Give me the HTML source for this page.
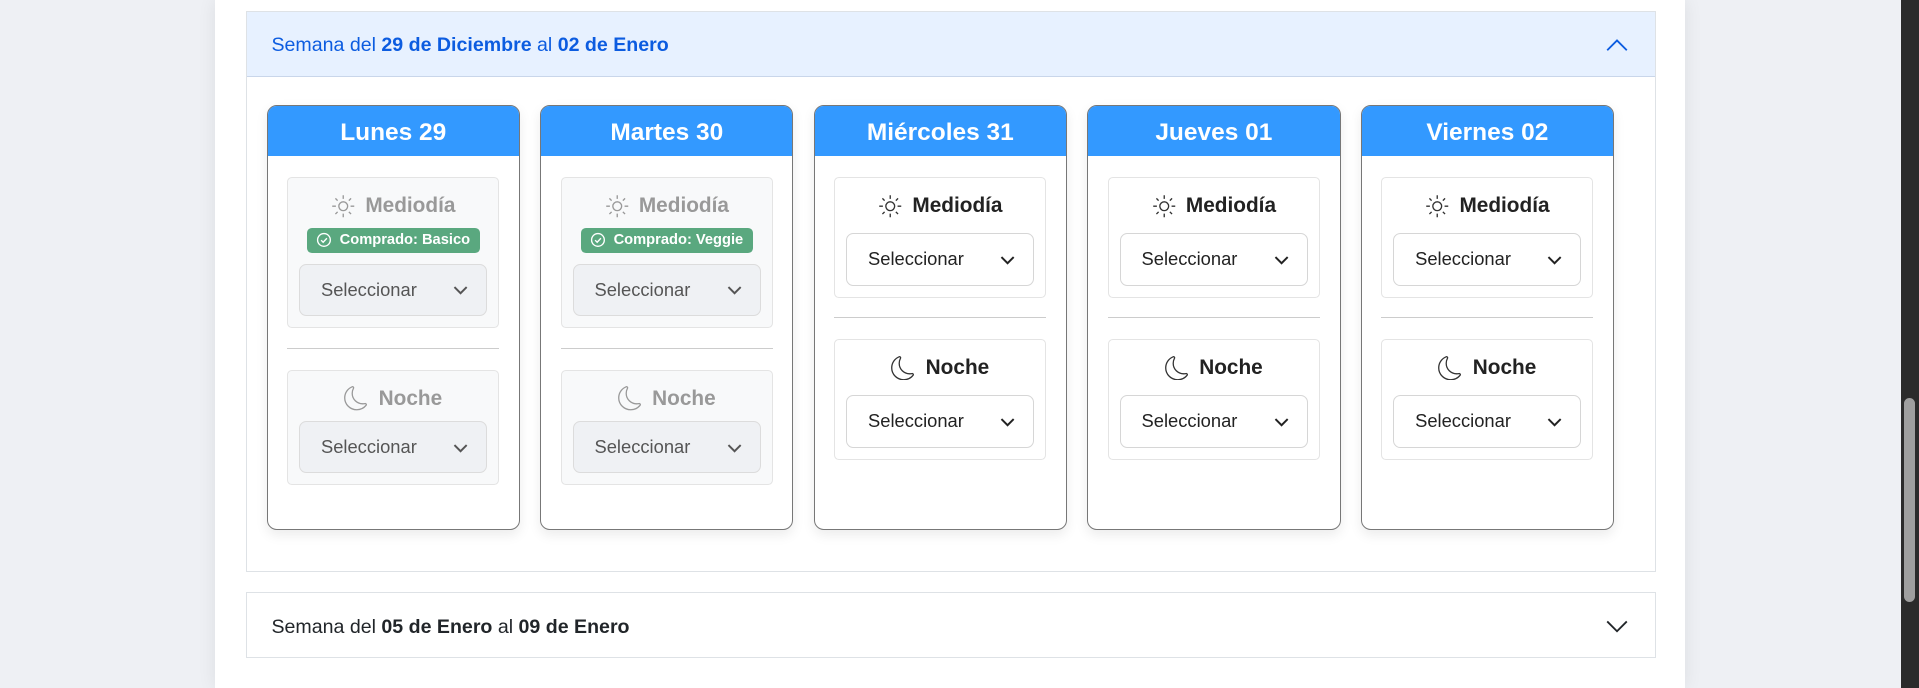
<!DOCTYPE html>
<html><head><meta charset="utf-8"><style>
html{zoom:1.2239}
*{box-sizing:border-box;margin:0;padding:0}
body{width:1568px;height:562px;overflow:hidden;background:#eef0f4;font-family:"Liberation Sans",Arial,sans-serif;position:relative}
.cont{position:absolute;left:176px;top:0;width:1201px;height:562px;background:#fff;box-shadow:0 0 14px rgba(0,0,0,.08)}
.sb{position:absolute;left:1553px;top:0;width:15px;height:562px;background:#2b2b2b}
.thumb{position:absolute;left:3px;top:325px;width:9px;height:167px;border-radius:5px;background:#9f9f9f}
.acc{position:absolute;left:201px;width:1152px;border:1px solid #dee2e6}
.h1{height:53px;background:#e7f1ff;border-bottom:1px solid #c9d6ea;color:#0c5ce0;font-size:16px;padding-left:20px;padding-top:3px;display:flex;align-items:center;position:relative}
.chev{position:absolute;right:22px;top:50%;margin-top:-5px}
.days{display:flex;gap:16.5px;padding:23px 0 0 16px;height:404px}
.card{width:207px;height:347px;border:1px solid #777;border-radius:8px;overflow:hidden;box-shadow:0 4px 10px rgba(0,0,0,.08)}
.ch{height:41px;background:#3399ff;color:#fff;font-weight:bold;font-size:20px;text-align:center;line-height:44px}
.in{padding:17px 16px 0}
.box{border:1px solid #e4e4e4;border-radius:4px;padding:9px 9px 9px;text-align:center}
.dis{background:#f8f9fa}
.t{font-weight:bold;font-size:17px;color:#222;height:28px;display:flex;align-items:center;justify-content:center;gap:8px;margin-bottom:8px}
.dis .t{color:#999;margin-bottom:4px}
.badge{display:inline-flex;align-items:center;gap:6px;background:#5aa87f;color:#fff;font-weight:bold;font-size:12px;height:20px;padding:0 8px;border-radius:4px;margin-bottom:9px}
.sel{height:43px;border:1px solid #d6d6d6;border-radius:6px;display:flex;align-items:center;justify-content:space-between;padding:0 14px 0 17px;font-size:15px;color:#222;text-align:left}
.dis .sel{background:#eff1f4;color:#555;border-color:#dcdcdc}
.div{border-top:1px solid #ccc;margin:16px 0 17px}
</style></head><body>
<div class="cont"></div>
<div class="sb"><div class="thumb"></div></div>

<svg width="0" height="0" style="position:absolute"><defs>
<symbol id="sun" viewBox="0 0 20 20"><circle cx="10" cy="10" r="3.6" fill="none" stroke="currentColor" stroke-width="1.1"/><g stroke="currentColor" stroke-width="1.1"><path d="M10 1v3M10 16v3M1 10h3M16 10h3M3.6 3.6l1.8 1.8M14.6 14.6l1.8 1.8M3.6 16.4l1.8-1.8M14.6 5.4l1.8-1.8"/></g></symbol>
<symbol id="moon" viewBox="-0.5 -0.5 17 17"><path d="M6 .278a.77.77 0 0 1 .08.858 7.2 7.2 0 0 0-.878 3.46c0 4.021 3.278 7.277 7.318 7.277q.792-.001 1.533-.16a.79.79 0 0 1 .81.316.73.73 0 0 1-.031.893A8.35 8.35 0 0 1 8.344 16C3.734 16 0 12.286 0 7.71 0 4.266 2.114 1.312 5.124.06A.75.75 0 0 1 6 .278" fill="none" stroke="currentColor" stroke-width="0.9"/></symbol>
<symbol id="dn" viewBox="0 0 14 14"><path d="M2 5l5 5 5-5" fill="none" stroke="currentColor" stroke-width="1.6"/></symbol>
<symbol id="ok" viewBox="0 0 14 14"><circle cx="7" cy="7" r="5.6" fill="none" stroke="#fff" stroke-width="1.2"/><path d="M4.5 7.2l1.8 1.8 3.3-3.5" fill="none" stroke="#fff" stroke-width="1.2"/></symbol>
</defs></svg>

<div class="acc" style="top:9px;height:458px">
<div class="h1">Semana del&nbsp;<b>29 de Diciembre</b>&nbsp;al&nbsp;<b>02 de Enero</b>
<svg class="chev" width="18" height="12" viewBox="0 0 18 12"><path d="M1 10l8-8 8 8" fill="none" stroke="#0c5ce0" stroke-width="1.5"/></svg></div>
<div class="days">
<div class="card"><div class="ch">Lunes 29</div><div class="in">
<div class="box dis"><div class="t"><svg width="20" height="20" style="color:#999"><use href="#sun"/></svg>Mediodía</div>
<div class="badge"><svg width="13" height="13"><use href="#ok"/></svg>Comprado: Basico</div>
<div class="sel">Seleccionar<svg width="14" height="14"><use href="#dn"/></svg></div></div>
<div class="div"></div>
<div class="box dis"><div class="t"><svg width="20" height="20" style="color:#999"><use href="#moon"/></svg>Noche</div>
<div class="sel">Seleccionar<svg width="14" height="14"><use href="#dn"/></svg></div></div>
</div></div>
<div class="card"><div class="ch">Martes 30</div><div class="in">
<div class="box dis"><div class="t"><svg width="20" height="20" style="color:#999"><use href="#sun"/></svg>Mediodía</div>
<div class="badge"><svg width="13" height="13"><use href="#ok"/></svg>Comprado: Veggie</div>
<div class="sel">Seleccionar<svg width="14" height="14"><use href="#dn"/></svg></div></div>
<div class="div"></div>
<div class="box dis"><div class="t"><svg width="20" height="20" style="color:#999"><use href="#moon"/></svg>Noche</div>
<div class="sel">Seleccionar<svg width="14" height="14"><use href="#dn"/></svg></div></div>
</div></div>
<div class="card"><div class="ch">Miércoles 31</div><div class="in">
<div class="box"><div class="t"><svg width="20" height="20" style="color:#333"><use href="#sun"/></svg>Mediodía</div>
<div class="sel">Seleccionar<svg width="14" height="14"><use href="#dn"/></svg></div></div>
<div class="div"></div>
<div class="box"><div class="t"><svg width="20" height="20" style="color:#333"><use href="#moon"/></svg>Noche</div>
<div class="sel">Seleccionar<svg width="14" height="14"><use href="#dn"/></svg></div></div>
</div></div>
<div class="card"><div class="ch">Jueves 01</div><div class="in">
<div class="box"><div class="t"><svg width="20" height="20" style="color:#333"><use href="#sun"/></svg>Mediodía</div>
<div class="sel">Seleccionar<svg width="14" height="14"><use href="#dn"/></svg></div></div>
<div class="div"></div>
<div class="box"><div class="t"><svg width="20" height="20" style="color:#333"><use href="#moon"/></svg>Noche</div>
<div class="sel">Seleccionar<svg width="14" height="14"><use href="#dn"/></svg></div></div>
</div></div>
<div class="card"><div class="ch">Viernes 02</div><div class="in">
<div class="box"><div class="t"><svg width="20" height="20" style="color:#333"><use href="#sun"/></svg>Mediodía</div>
<div class="sel">Seleccionar<svg width="14" height="14"><use href="#dn"/></svg></div></div>
<div class="div"></div>
<div class="box"><div class="t"><svg width="20" height="20" style="color:#333"><use href="#moon"/></svg>Noche</div>
<div class="sel">Seleccionar<svg width="14" height="14"><use href="#dn"/></svg></div></div>
</div></div>
</div></div>

<div class="acc" style="top:484px;height:54px">
<div class="h1" style="background:#fff;color:#212529;border:none;height:52px">Semana del&nbsp;<b>05 de Enero</b>&nbsp;al&nbsp;<b>09 de Enero</b>
<svg class="chev" width="18" height="12" viewBox="0 0 18 12"><path d="M1 2l8 8 8-8" fill="none" stroke="#212529" stroke-width="1.5"/></svg></div>
</div>
</body></html>
